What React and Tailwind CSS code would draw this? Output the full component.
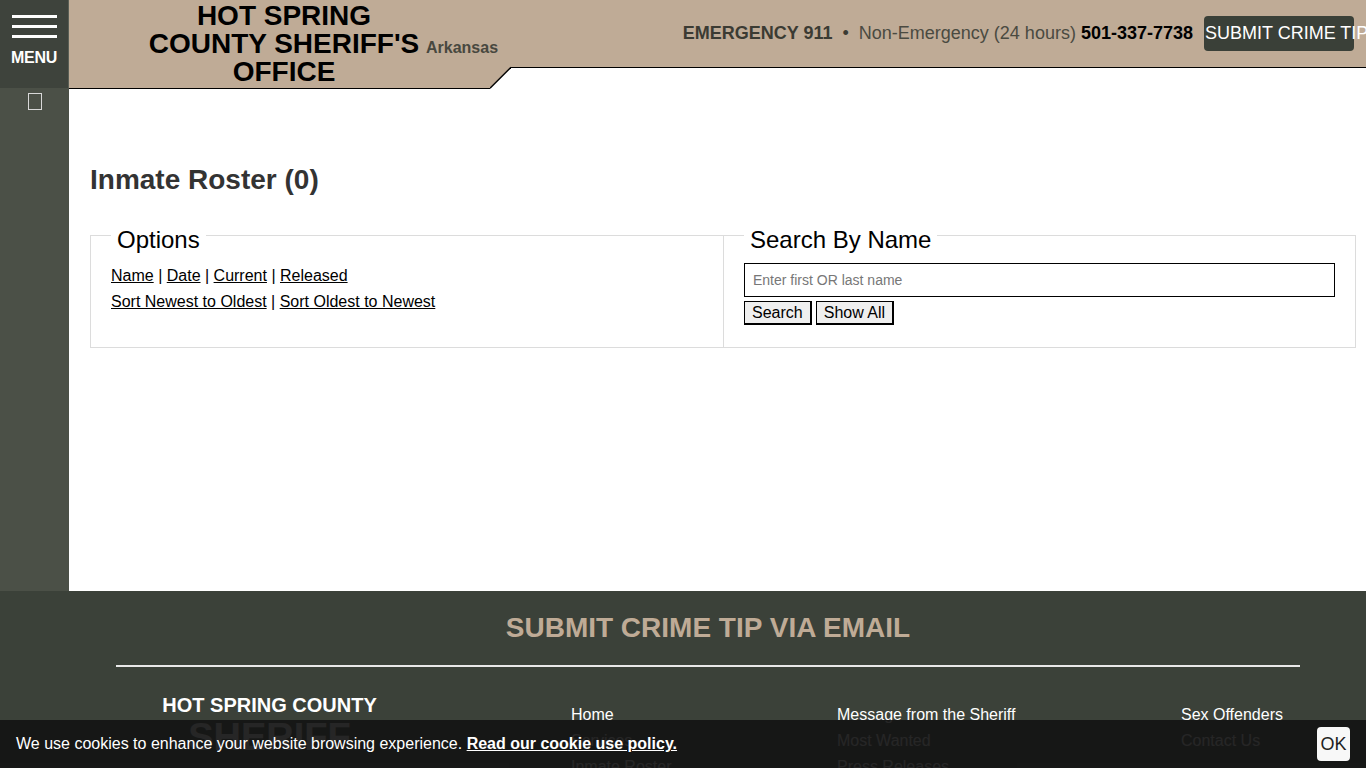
import React from 'react';

const TAN = '#bfab96';

const footerCols = [
    ['Home', 'Services', 'Inmate Roster'],
    ['Message from the Sheriff', 'Most Wanted', 'Press Releases'],
    ['Sex Offenders', 'Contact Us'],
];

const Sidebar = () => (
    <aside className="w-[69px] shrink-0 bg-[#4b5047] flex flex-col">
        <button className="h-[88px] bg-[#3e433c] border-r border-[#5a5f56] flex flex-col items-center pt-[15px]">
            <span className="block w-[45px] h-[3px] bg-white" />
            <span className="block w-[45px] h-[3px] bg-white mt-[7px]" />
            <span className="block w-[45px] h-[3px] bg-white mt-[7px]" />
            <span className="text-white font-bold text-[16px] leading-[18px] mt-[11px] tracking-[-0.3px]">MENU</span>
        </button>
        <div className="flex justify-center pt-[5px]">
            <span className="block w-[14px] h-[17px] border border-[#d8d8d8]" />
        </div>
    </aside>
);

const Header = () => (
    <header className="flex items-start">
        <div className="w-[421px] h-[89px] shrink-0 bg-[#bfab96] border-b-[1.5px] border-black flex items-start pl-[79px] pt-[2px]">
            <h2 className="w-[272px] shrink-0 text-center text-black font-bold text-[28px] leading-[28px] whitespace-nowrap">
                HOT SPRING<br />COUNTY SHERIFF'S<br />OFFICE
            </h2>
            <span className="relative z-10 ml-[6px] mt-[36px] text-[16px] leading-[20px] font-bold text-[#48483f] whitespace-nowrap">Arkansas</span>
        </div>
        <svg width="21" height="89" viewBox="0 0 21 89" className="shrink-0 block">
            <polygon points="0,0 21,0 21,67.5 0,88" fill={TAN} />
            <line x1="0" y1="88.25" x2="21" y2="67.25" stroke="#000" strokeWidth="1.5" />
        </svg>
        <div className="flex-1 h-[68px] bg-[#bfab96] border-b-[1.5px] border-black flex items-center justify-end pr-[12px] pb-[1px] text-[18px] whitespace-nowrap">
            <span className="font-bold text-[#3b3b33]">EMERGENCY 911</span>
            <span className="mx-[10px] text-[#3b3b33]">•</span>
            <span className="text-[#4a4a41]">Non-Emergency (24 hours)</span>
            <span className="ml-[5px] font-bold text-black">501-337-7738</span>
            <button className="ml-[11px] w-[150px] h-[35px] bg-[#3a4038] rounded-[4px] text-white text-[18px] text-left pl-[1px] whitespace-nowrap overflow-visible">
                SUBMIT CRIME TIP
            </button>
        </div>
    </header>
);

const Roster = () => (
    <main className="pl-[21px] pr-[10px]">
        <h1 className="mt-[76px] text-[28px] leading-[30px] font-bold text-[#333]">Inmate Roster (0)</h1>
        <div className="mt-[22px] grid grid-cols-2">
            <fieldset className="border border-r-0 border-[#dcdcdc] px-[20px] pt-[10px] pb-[22px]">
                <legend className="px-[6px] pt-[10px] text-[24px] leading-[26px] text-black">Options</legend>
                <p className="text-[16px] leading-[26px] text-black">
                    <a className="underline" href="#">Name</a> | <a className="underline" href="#">Date</a> | <a className="underline" href="#">Current</a> | <a className="underline" href="#">Released</a>
                </p>
                <p className="text-[16px] leading-[26px] text-black">
                    <a className="underline" href="#">Sort Newest to Oldest</a> | <a className="underline" href="#">Sort Oldest to Newest</a>
                </p>
            </fieldset>
            <fieldset className="border border-[#dcdcdc] px-[20px] pt-[10px] pb-[22px]">
                <legend className="px-[6px] pt-[10px] text-[24px] leading-[26px] text-black">Search By Name</legend>
                <input
                    type="text"
                    placeholder="Enter first OR last name"
                    className="block w-full h-[34px] border border-black px-[8px] text-[14px] placeholder:text-[#777]"
                />
                <div className="mt-[4px] flex gap-[4px]">
                    <button className="h-[24px] px-[7px] bg-[#efefef] border border-black border-r-2 border-b-2 text-[16px] leading-[20px] text-black">Search</button>
                    <button className="h-[24px] px-[7px] bg-[#efefef] border border-black border-r-2 border-b-2 text-[16px] leading-[20px] text-black">Show All</button>
                </div>
            </fieldset>
        </div>
    </main>
);

const Footer = () => (
    <footer className="bg-[#3b4139] flex-1">
        <div className="ml-[116px] w-[1184px]">
            <h3 className="pt-[22px] text-center text-[28px] leading-[30px] font-bold text-[#bfab96]">SUBMIT CRIME TIP VIA EMAIL</h3>
            <div className="mt-[22px] h-[1.5px] bg-[#e8e8e8]" />
            <div className="mt-[26px] flex">
                <div className="w-[307px] shrink-0 text-center text-white font-bold">
                    <div className="text-[20px] leading-[24px]">HOT SPRING COUNTY</div>
                    <div className="text-[38px] leading-[40px]">SHERIFF</div>
                </div>
                {footerCols.map((col, i) => (
                    <ul
                        key={i}
                        className={
                            i === 0
                                ? 'ml-[148px] w-[266px] mt-[9px]'
                                : i === 1
                                ? 'w-[344px] mt-[9px]'
                                : 'flex-1 mt-[9px]'
                        }
                    >
                        {col.map((item) => (
                            <li key={item} className="text-white text-[16px] leading-[26px]">{item}</li>
                        ))}
                    </ul>
                ))}
            </div>
        </div>
    </footer>
);

export default function App() {
    return (
        <div className="relative h-screen overflow-hidden flex flex-col bg-white" style={{ fontFamily: '"Liberation Sans", Arial, sans-serif' }}>
            <div className="flex h-[591px] shrink-0">
                <Sidebar />
                <div className="flex-1 min-w-0">
                    <Header />
                    <Roster />
                </div>
            </div>
            <Footer />

            <div className="absolute left-0 right-0 bottom-0 h-[48px] bg-[rgba(20,20,20,0.92)] flex items-center justify-between pl-[16px] pr-[16px]">
                <p className="text-white text-[16px]">
                    We use cookies to enhance your website browsing experience. <a href="#" className="font-bold underline">Read our cookie use policy.</a>
                </p>
                <button className="w-[33px] h-[34px] bg-[#f8f8f8] rounded-[4px] text-[18px] text-[#222]">OK</button>
            </div>
        </div>
    );
}
